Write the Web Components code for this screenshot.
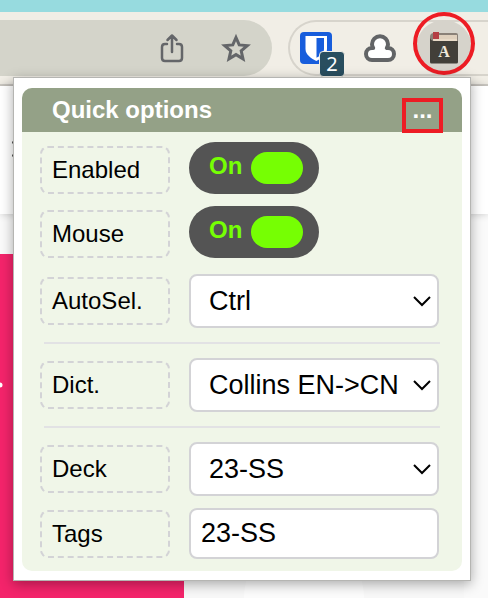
<!DOCTYPE html>
<html lang="en">
<head>
<meta charset="utf-8">
<meta name="viewport" content="width=device-width, initial-scale=1">
<title>Quick options</title>
<style>
html, body { height: 100%; }
body { margin: 0; overflow: hidden; background: #fff; font-family: "Liberation Sans", Arial, sans-serif; }
</style>
</head>
<body>
<browser-window>
  <browser-toolbar slot="toolbar"></browser-toolbar>
  <page-backdrop slot="page"></page-backdrop>
  <options-popup slot="popup" heading="Quick options">
    <switch-row label="Enabled"></switch-row>
    <switch-row label="Mouse"></switch-row>
    <select-row class="first" label="AutoSel." value="Ctrl"></select-row>
    <hr>
    <select-row label="Dict." value="Collins EN-&gt;CN"></select-row>
    <hr>
    <select-row label="Deck" value="23-SS"></select-row>
    <text-row label="Tags" value="23-SS"></text-row>
  </options-popup>
</browser-window>
<script>
const define = (name, html, setup) => {
  const template = document.createElement('template');
  template.innerHTML = html;
  customElements.define(name, class extends HTMLElement {
    constructor() {
      super();
      this.attachShadow({ mode: 'open' }).append(template.content.cloneNode(true));
    }
    connectedCallback() { if (setup) setup(this, this.shadowRoot); }
  });
};

define('browser-window', `
<style>
  :host { display: flex; flex-direction: column; position: relative; min-height: 100%; }
  ::slotted([slot=page]) { flex: 1; }
  ::slotted([slot=popup]) { position: absolute; top: 77px; left: 13px; right: 17px; }
</style>
<slot name="toolbar"></slot><slot name="page"></slot><slot name="popup"></slot>`);

define('browser-toolbar', `
<style>
  :host { display: block; background: #f1eee6; border-top: 12px solid #97dbdf; border-bottom: 2px solid #cfccc6; }
  .bar { display: flex; gap: 16px; padding: 8px 0; }
  button { all: unset; display: flex; cursor: pointer; }
  svg { display: block; overflow: visible; }
  .address { box-sizing: border-box; flex: 1; height: 56px; display: flex; align-items: center; justify-content: flex-end;
    gap: 32px; padding-right: 20px; background: #d4d4ca; border-radius: 0 28px 28px 0; }
  .extensions { box-sizing: border-box; width: 200px; height: 56px; display: flex; align-items: center; gap: 20px;
    padding-left: 10px; border: 2px solid #d7d4cc; border-right: 0; border-radius: 28px 0 0 28px; }
  .vault { position: relative; }
  .count { position: absolute; left: 19px; top: 19px; width: 24px; height: 24px; border: 1px solid #f1eee6; border-radius: 4px;
    background: #294e5f; color: #fff; font: 20px/24px "Noto Sans", sans-serif; text-align: center; }
  .cloud { margin-left: 12px; }
  .dictionary { position: relative; width: 56px; height: 56px; border-radius: 50%; background: #d6d3cb;
    align-items: center; justify-content: center; }
  .ring { position: absolute; box-sizing: border-box; left: -3px; top: -8px; width: 62px; height: 63px;
    border: 4px solid #ed1c24; border-radius: 50%; }
</style>
<div class="bar">
  <div class="address">
    <button aria-label="Share"><svg width="32" height="32" viewBox="0 0 32 32" fill="none" stroke="#646669" stroke-width="2.5" stroke-linecap="round" stroke-linejoin="round"><path d="M11 12H9q-3 0-3 3v11q0 3 3 3h14q3 0 3-3V15q0-3-3-3h-2M16 20V4M11.500 8 16 3.500 20.500 8"/></svg></button>
    <button aria-label="Bookmark"><svg width="32" height="32" viewBox="0 0 32 32" fill="none" stroke="#646669" stroke-width="3"><path d="m16 5.500 3.200 7.400 8.100.7-6.100 5.300 1.800 7.900-7-4.200-7 4.200 1.800-7.900-6.100-5.300 8.100-.7z"/></svg></button>
  </div>
  <div class="extensions">
    <button class="vault" aria-label="Vault"><svg width="32" height="32" viewBox="0 0 32 32"><rect width="32" height="32" rx="4" fill="#175ddc"/><path d="M5.500 4h21.500v13c0 6-6 9.500-10.700 12C11.500 26.500 5.500 23 5.500 17z" fill="#fff"/><path d="M16.500 6H24v11c0 4-4 7-7.500 8.800z" fill="#175ddc"/></svg><span class="count">2</span></button>
    <button class="cloud" aria-label="Cloud"><svg width="32" height="28" viewBox="0 0 32 28"><path d="M8 26a6 6 0 0 1 0-12h1.200Q8 12 8 10.200a8 8 0 0 1 16 0Q24 12 22.800 14H24a6 6 0 0 1 0 12z" fill="#fff" stroke="#626466" stroke-width="4" stroke-linejoin="round"/></svg></button>
    <button class="dictionary" aria-label="Dictionary"><svg width="28" height="32" viewBox="0 0 28 32">
      <path d="M0 5q0-4 4-4h22q2 0 2 2v7H0z" fill="#8a8178"/><path d="M3 3h24v6H3z" fill="#e9dbc8"/><path d="M3 4h24M3 6h24" stroke="#c9b9a6" stroke-width=".6"/>
      <path d="M0 6q1 3 4 3h24v21q0 1.500-1.500 1.500h-25Q0 31.500 0 30z" fill="#423f39"/><path d="M3 0h6v7H3z" fill="#b43e44"/>
      <text x="14" y="25" text-anchor="middle" font-family="Liberation Serif, serif" font-weight="bold" font-size="16" fill="#efe7d8">A</text></svg><span class="ring"></span></button>
  </div>
</div>`);

define('page-backdrop', `
<style>
  :host { display: flex; flex-direction: column; background: #fafafa; }
  .top { height: 128px; background: #fff; box-shadow: 0 0 8px #0003; }
  .top svg { display: block; margin-left: 12px; padding-top: 54px; }
  .hero { flex: 1; display: flex; margin-top: 40px; overflow: hidden; }
  .pink { width: 184px; background: #f4246b; }
  .pink svg { display: block; padding-top: 126px; }
  .card { flex: 1; margin-right: 24px; padding-right: 40px; background: #f8f8f8; display: flex; align-items: flex-end; justify-content: center; }
  .disc { width: 120px; height: 120px; border-radius: 50%; background: #fcfcfc; margin-bottom: -60px; }
</style>
<div class="top"><svg width="4" height="20"><path d="M0 3 3 1M0 15l3 2" stroke="#555" stroke-width="2"/></svg></div>
<div class="hero"><div class="pink"><svg width="4" height="10"><circle cx="0" cy="5" r="2.500" fill="#fff"/></svg></div><div class="card"><div class="disc"></div></div></div>`);

define('options-popup', `
<style>
  :host { display: block; box-sizing: border-box; padding: 10px 8px 9px; background: #fff; border: 1px solid #b5b5b2;
    box-shadow: 0 3px 12px #0005; }
  .panel { border-radius: 10px; overflow: hidden; background: #f0f6e8; }
  header { display: flex; align-items: center; justify-content: space-between; height: 44px; padding: 0 19px 0 30px;
    background: #94a187; color: #fff; }
  h1 { margin: 0; font-size: 24px; line-height: 44px; }
  button { box-sizing: border-box; width: 41px; height: 35px; margin-top: 11px; padding: 0 0 11px; border: 4px solid #ed1c24;
    background: none; color: #fff; font: bold 24px/16px "Liberation Sans", Arial, sans-serif; cursor: pointer; }
  .rows { display: flex; flex-direction: column; gap: 12px; padding: 10px 23px 12px 18px; }
  ::slotted(hr) { box-sizing: border-box; width: auto; height: 2px; margin: 2px -1px 2px 4px; border: 0; background: #e2e2e4; }
  ::slotted(.first) { margin-top: 4px; }
</style>
<section class="panel">
  <header><h1></h1><button aria-label="More options">...</button></header>
  <div class="rows"><slot></slot></div>
</section>`, (host, root) => { root.querySelector('h1').textContent = host.getAttribute('heading'); });

const rowStyle = `
  :host { display: grid; grid-template-columns: 130px 1fr; column-gap: 19px; align-items: center; }
  .name { box-sizing: border-box; height: 48px; padding-left: 10px; border: 2px dashed #d3d3d6; border-radius: 8px;
    font-size: 24px; line-height: 44px; }
  .control { box-sizing: border-box; width: 100%; min-width: 0; margin: 0; border: 2px solid #d3d3d6; border-radius: 8px;
    background: #fff; color: #000; font: 27px/32px "Liberation Sans", Arial, sans-serif; }`;
const setLabel = (host, root) => { root.querySelector('.name').textContent = host.getAttribute('label'); };

define('switch-row', `
<style>${rowStyle}
  :host { align-items: end; }
  .switch { box-sizing: border-box; width: 130px; height: 52px; padding: 0 16px 0 20px; display: flex; align-items: center;
    justify-content: space-between; border-radius: 26px; background: #545454; color: #76ff03; font-weight: bold; font-size: 24px; line-height: 28px; }
  .switch span { padding-bottom: 4px; }
  input { appearance: none; width: 52px; height: 32px; margin: 0; border-radius: 16px; background: #76ff03; }
</style>
<label class="name" for="c"></label>
<div class="switch"><span>On</span><input id="c" type="checkbox" role="switch" checked></div>`, setLabel);

define('select-row', `
<style>${rowStyle}
  .field { display: grid; align-items: center; }
  .field > * { grid-area: 1 / 1; }
  select { appearance: none; height: 54px; padding: 0 36px 0 18px; }
  svg { justify-self: end; margin-right: 8px; pointer-events: none; }
</style>
<label class="name" for="c"></label>
<div class="field"><select class="control" id="c"></select>
<svg width="18" height="12" viewBox="0 0 18 12" fill="none" stroke="#000" stroke-width="2"><path d="m1 2 8 8 8-8"/></svg></div>`,
(host, root) => {
  setLabel(host, root);
  root.querySelector('select').replaceChildren(new Option(host.getAttribute('value')));
});

define('text-row', `
<style>${rowStyle}
  input { height: 51px; padding: 0 10px; }
</style>
<label class="name" for="c"></label>
<input class="control" id="c" type="text">`, (host, root) => {
  setLabel(host, root);
  root.querySelector('input').value = host.getAttribute('value');
});
</script>
</body>
</html>
